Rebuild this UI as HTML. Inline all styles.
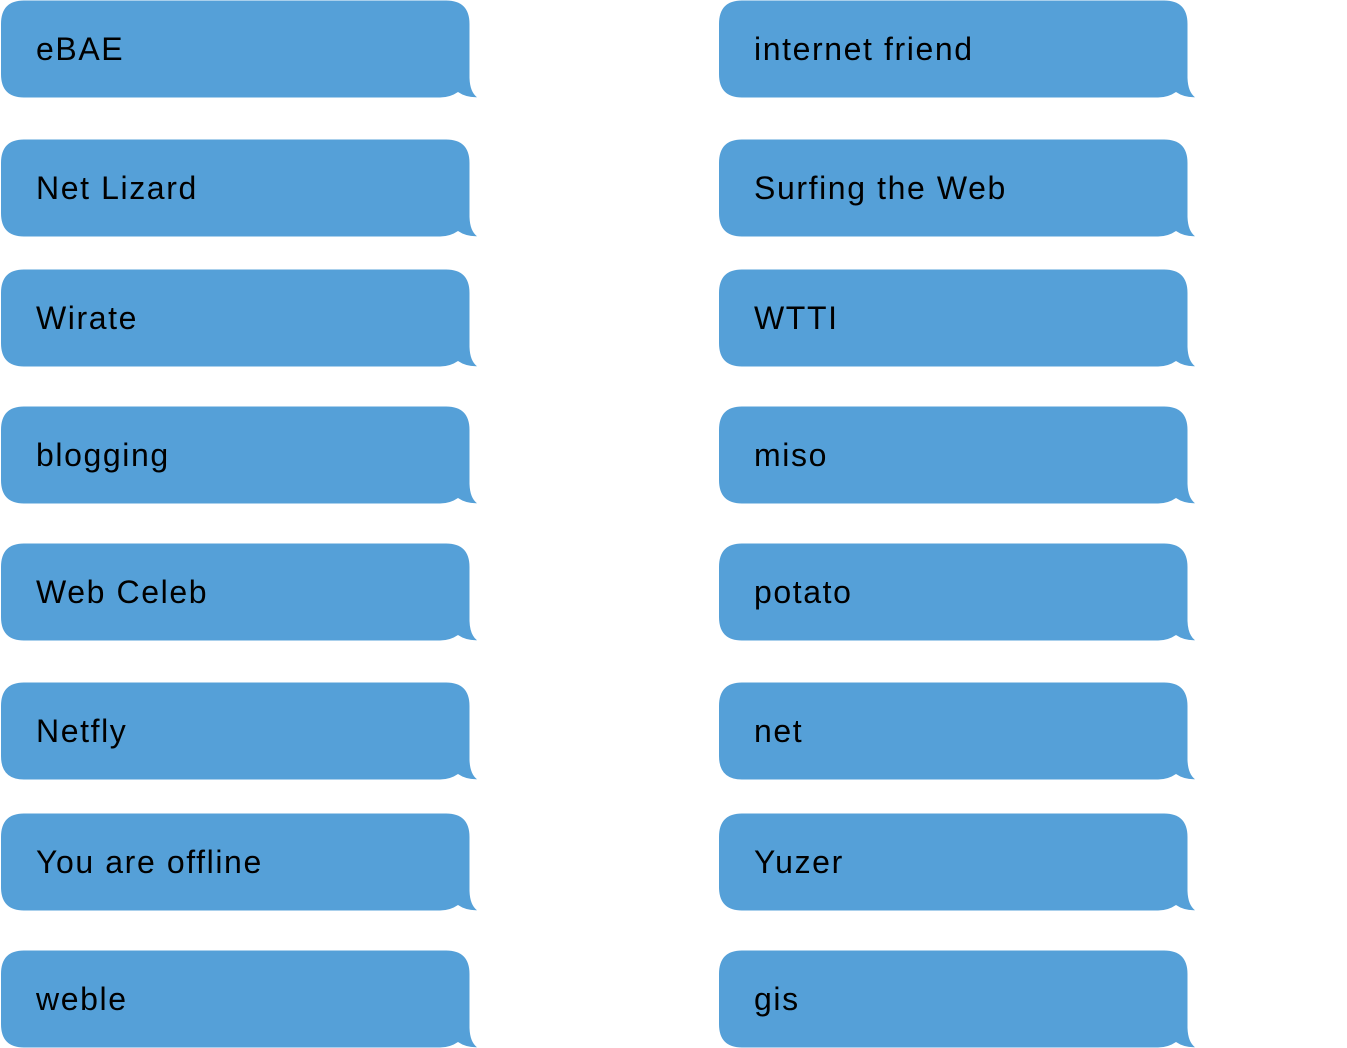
<!DOCTYPE html>
<html><head><meta charset="utf-8"><style>
html,body{margin:0;padding:0;background:#fff;width:1347px;height:1048px;overflow:hidden;position:relative}
.b{position:absolute;width:478px;height:98px}
.b svg{position:absolute;left:0;top:0}
.b span{position:absolute;left:36px;top:30px;font:32px/38px "Liberation Sans",sans-serif;letter-spacing:1.6px;color:#000;white-space:nowrap}
</style></head><body>
<svg width="0" height="0" style="position:absolute"><defs><path id="bp" d="M24,0.5 H446 Q469.5,0.5 469.5,24 V78 Q470,92 477,97.2 Q466,97.5 458,92 Q450,97.5 440,97.5 H24 Q1,97.5 1,74 V24 Q1,0.5 24,0.5 Z" fill="#55a0d8"/></defs></svg>
<script>
const L=["eBAE","Net Lizard","Wirate","blogging","Web Celeb","Netfly","You are offline","weble"];
const R=["internet friend","Surfing the Web","WTTI","miso","potato","net","Yuzer","gis"];
const T=[0,139,269,406,543,682,813,950];
let h="";
T.forEach((t,i)=>{[[0,L[i]],[718,R[i]]].forEach(([x,s])=>{h+=`<div class="b" style="left:${x}px;top:${t}px"><svg width="478" height="98"><use href="#bp"/></svg><span>${s}</span></div>`;});});
document.write(h);
</script>
</body></html>
